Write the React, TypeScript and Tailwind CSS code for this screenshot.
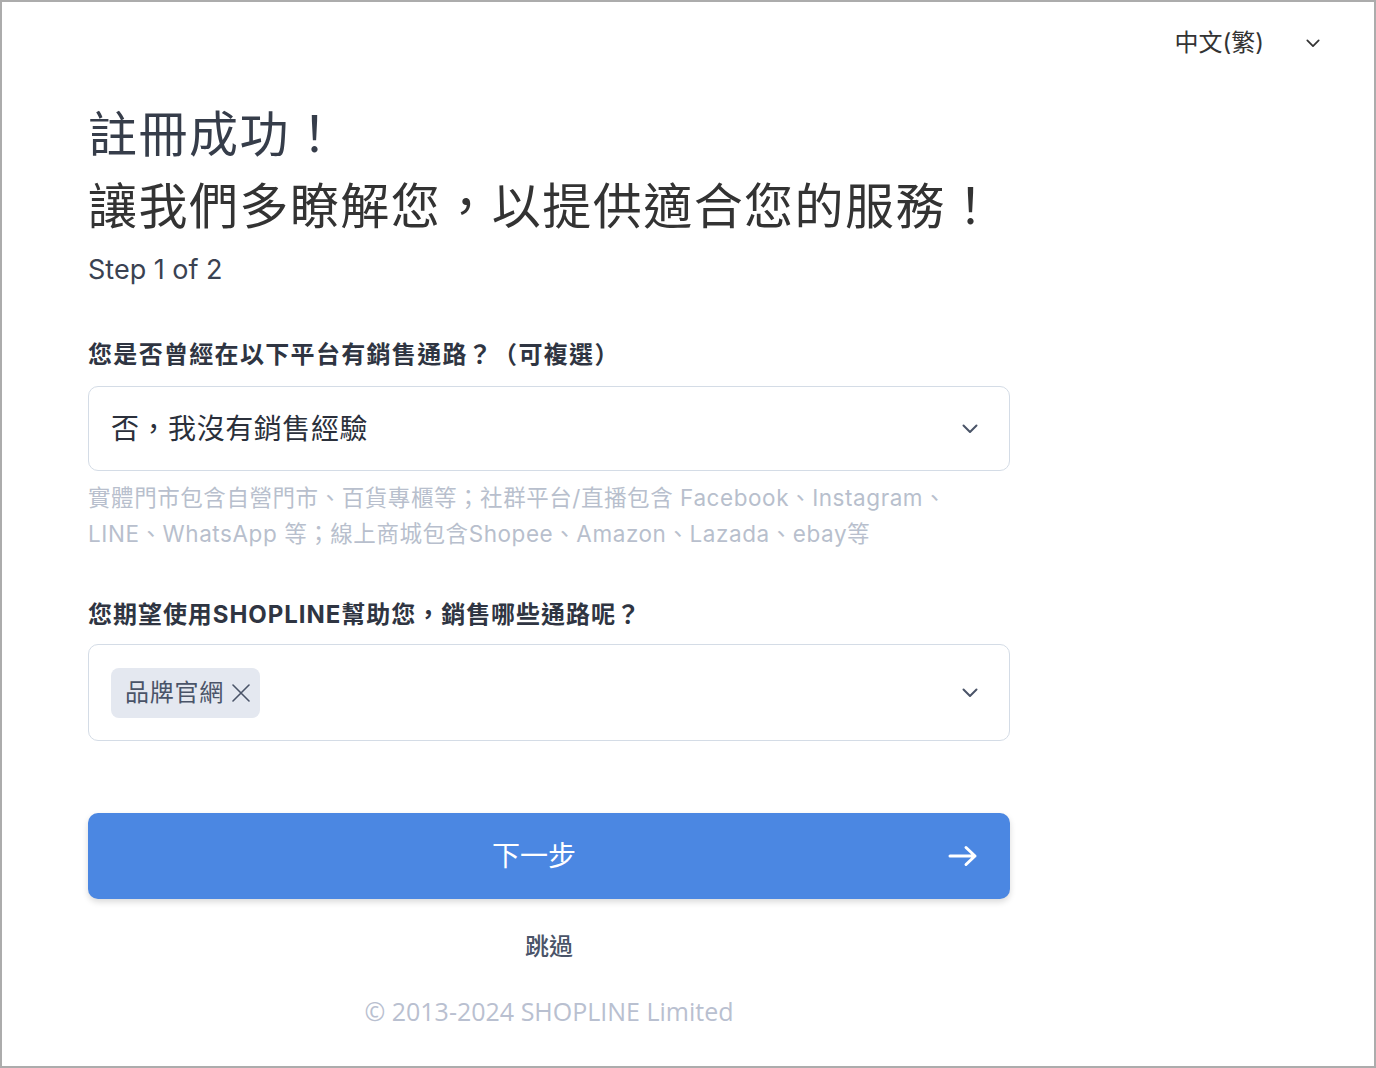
import React from 'react';

const CJK = '"Inter", "Noto Sans CJK TC", sans-serif';

function Chevron({ className }: { className?: string }) {
  return (
    <svg viewBox="0 0 16 10" fill="none" className={className}>
      <path d="M1.5 1.5L8 8L14.5 1.5" stroke="currentColor" strokeWidth="2" strokeLinecap="round" strokeLinejoin="round" />
    </svg>
  );
}

export default function App() {
  return (
    <div
      className="min-h-screen box-border border-2 border-[#acacac] bg-white flex flex-col"
      style={{ fontFamily: CJK }}
    >
      {/* language picker */}
      <div className="flex justify-end items-center pt-[24px] pr-[54px] gap-[42px] text-[#333]">
        <span className="text-[24px] leading-[34px]">中文(繁)</span>
        <Chevron className="w-[14px] h-[9px] text-[#333]" />
      </div>

      <div className="pl-[86px] w-[1008px] flex flex-col">
        <h1 className="mt-[39px] text-[49px] leading-[72px] font-normal tracking-[0.03em]">
          <span className="block text-[#363d4a]">註冊成功！</span>
          <span className="block text-[#333]">讓我們多瞭解您，以提供適合您的服務！</span>
        </h1>
        <p className="mt-[9px] text-[27px] leading-[36px] text-[#3a4252]">Step 1 of 2</p>

        <label className="mt-[51px] text-[24px] leading-[32px] font-bold text-[#2f3542] tracking-[0.055em]">
          您是否曾經在以下平台有銷售通路？（可複選）
        </label>
        <div className="mt-[15px] h-[85px] rounded-[10px] border border-[#d4dce6] flex items-center pl-[22px] pr-[31px]">
          <span className="flex-1 text-[28px] text-[#2b303b] tracking-[0.02em]">否，我沒有銷售經驗</span>
          <Chevron className="w-[16px] h-[10px] text-[#4a5468]" />
        </div>
        <p className="mt-[9px] text-[22.5px] leading-[36px] text-[#b8bfcd] tracking-[0.025em]">
          實體門市包含自營門市、百貨專櫃等；社群平台/直播包含 Facebook、Instagram、
          <br />
          LINE、WhatsApp 等；線上商城包含Shopee、Amazon、Lazada、ebay等
        </p>

        <label className="mt-[47px] text-[24px] leading-[32px] font-bold text-[#2f3542] tracking-[0.04em]">
          您期望使用SHOPLINE幫助您，銷售哪些通路呢？
        </label>
        <div className="mt-[13px] h-[97px] rounded-[10px] border border-[#d4dce6] flex items-center pl-[22px] pr-[31px]">
          <div className="flex-1 flex">
            <span className="flex items-center gap-[8px] h-[50px] pl-[14px] pr-[10px] rounded-[8px] bg-[#e4e8f0] text-[24px] text-[#4a5468] tracking-[0.03em]">
              品牌官網
              <svg viewBox="0 0 18 18" className="w-[18px] h-[18px]" fill="none">
                <path d="M1 1L17 17M17 1L1 17" stroke="currentColor" strokeWidth="1.6" strokeLinecap="round" />
              </svg>
            </span>
          </div>
          <Chevron className="w-[16px] h-[10px] text-[#4a5468]" />
        </div>

        <button className="mt-[72px] h-[86px] rounded-[10px] bg-[#4b87e2] shadow-[0_3px_6px_rgba(0,0,0,0.15)] flex items-center pl-[32px] pr-[32px] text-white">
          <span className="flex-1 text-center text-[28px]">下一步</span>
          <svg viewBox="0 0 30 22" className="w-[30px] h-[22px]" fill="none">
            <path d="M2 11H27M18 2.5L27 11L18 19.5" stroke="white" strokeWidth="3" strokeLinecap="round" strokeLinejoin="round" />
          </svg>
        </button>

        <p className="mt-[32px] text-center text-[24px] leading-[32px] font-medium text-[#4a5468]">跳過</p>
        <p
          className="mt-[30px] text-center text-[25px] leading-[36px] text-[#b9c0d0]"
          style={{ fontFamily: '"Open Sans", "Noto Sans", sans-serif' }}
        >
          © 2013-2024 SHOPLINE Limited
        </p>
      </div>
    </div>
  );
}
